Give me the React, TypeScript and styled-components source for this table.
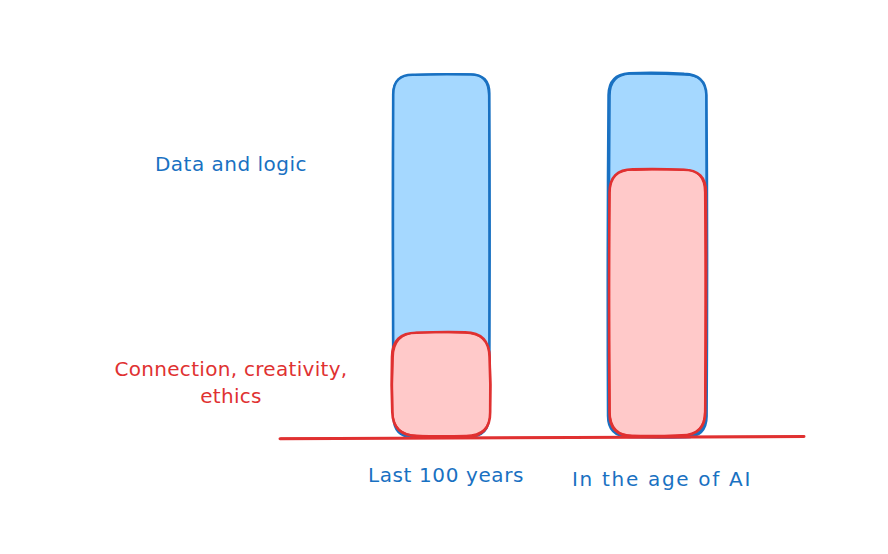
import React from "react";
import styled, { createGlobalStyle } from "styled-components";

const GlobalStyle = createGlobalStyle`
  html, body {
    margin: 0;
    padding: 0;
    background: #ffffff;
  }
  body {
    font-family: "DejaVu Sans", "Liberation Sans", sans-serif;
  }
`;

const BLUE = "#1971c2";
const BLUE_FILL = "#a5d8ff";
const RED = "#e03131";
const RED_FILL = "#ffc9c9";

const BAR_W = 99;
const BAR_H = 364;

// small deterministic wobble so the shapes look hand drawn
const wob = (seed: number) => Math.sin(seed * 12.9898) * 0.8;

const roughRect = (x: number, y: number, w: number, h: number, r: number, seed: number) => {
  const j = (n: number) => wob(seed + n);
  const x2 = x + w;
  const y2 = y + h;
  return [
    `M ${x + r + j(1)} ${y + j(2)}`,
    `Q ${x + w / 2} ${y - 1 + j(3)} ${x2 - r + j(4)} ${y + j(5)}`,
    `Q ${x2 + j(6)} ${y + j(7)} ${x2 + j(8)} ${y + r}`,
    `Q ${x2 + 1 + j(9)} ${y + h / 2} ${x2 + j(10)} ${y2 - r}`,
    `Q ${x2 + j(11)} ${y2 + j(12)} ${x2 - r} ${y2 + j(13)}`,
    `Q ${x + w / 2} ${y2 + 1 + j(14)} ${x + r + j(15)} ${y2}`,
    `Q ${x + j(16)} ${y2 + j(17)} ${x + j(18)} ${y2 - r}`,
    `Q ${x - 1 + j(19)} ${y + h / 2} ${x + j(20)} ${y + r}`,
    `Q ${x + j(21)} ${y + j(22)} ${x + r + j(1)} ${y + j(2)}`,
  ].join(" ");
};

const periods = [
  { label: "Last 100 years", human: 104, seed: 1, drop: 22, track: 0.6 },
  { label: "In the age of AI", human: 268, seed: 9, drop: 26, track: 1.7 },
];

// grid tracks follow the drawing: legend | bar | gap | bar | tail
const Stage = styled.div`
  display: grid;
  width: 888px;
  height: 554px;
  grid-template-columns: 280px 112px ${BAR_W}px 117px ${BAR_W}px 98px 1fr;
  grid-template-rows: 73px ${BAR_H}px 3px 1fr;
  background: #ffffff;
  overflow: hidden;
`;

const Legend = styled.div`
  grid-column: 1 / 3;
  grid-row: 2;
  display: flex;
  flex-direction: column;
  justify-content: space-between;
  align-items: center;
  padding: 78px 0 27px 70px;
`;

const Note = styled.div<{ $color: string; $track: number }>`
  color: ${(p) => p.$color};
  font-size: 20px;
  line-height: 27px;
  letter-spacing: ${(p) => p.$track}px;
  text-align: center;
  white-space: nowrap;
`;

const BarSlot = styled.div<{ $col: number }>`
  grid-column: ${(p) => p.$col};
  grid-row: 2;
  display: flex;
`;

const BarSvg = styled.svg`
  overflow: visible;
  display: block;
`;

const Axis = styled.svg`
  grid-column: 2 / 7;
  grid-row: 3;
  overflow: visible;
  display: block;
`;

const Period = styled.div<{ $col: number; $drop: number; $track: number }>`
  grid-column: ${(p) => p.$col};
  grid-row: 4;
  justify-self: center;
  align-self: start;
  padding: ${(p) => p.$drop}px 0 0 9px;
  color: ${BLUE};
  font-size: 20px;
  line-height: 27px;
  letter-spacing: ${(p) => p.$track}px;
  white-space: nowrap;
`;

const Stroke = ({ d, color }: { d: [string, string]; color: string }) => (
  <>
    <path d={d[0]} fill="none" stroke={color} strokeWidth={2.6} strokeLinejoin="round" />
    <path d={d[1]} fill="none" stroke={color} strokeWidth={1.5} strokeLinejoin="round" />
  </>
);

const StackedBar = ({ human, seed }: { human: number; seed: number }) => {
  const top = BAR_H - human;
  const blue = roughRect(0.8, 1, BAR_W - 2, BAR_H - 1, 21, seed);
  const blue2 = roughRect(1.4, 1.4, BAR_W - 3, BAR_H - 2, 21, seed + 3);
  const red = roughRect(0.8, top, BAR_W - 2, human - 1, 24, seed + 5);
  const red2 = roughRect(1.4, top + 0.4, BAR_W - 3, human - 2, 24, seed + 8);
  return (
    <BarSvg width={BAR_W} height={BAR_H} viewBox={`0 0 ${BAR_W} ${BAR_H}`}>
      <path d={blue} fill={BLUE_FILL} />
      <Stroke d={[blue, blue2]} color={BLUE} />
      <path d={red} fill={RED_FILL} />
      <Stroke d={[red, red2]} color={RED} />
    </BarSvg>
  );
};

export default function App() {
  return (
    <>
      <GlobalStyle />
      <Stage>
        <Legend>
          <Note $color={BLUE} $track={0.5}>
            Data and logic
          </Note>
          <Note $color={RED} $track={0.3}>
            Connection, creativity,
            <br />
            ethics
          </Note>
        </Legend>
        {periods.map((p, i) => (
          <BarSlot key={p.label} $col={3 + i * 2}>
            <StackedBar human={p.human} seed={p.seed} />
          </BarSlot>
        ))}
        <Axis width={525} height={3} viewBox="0 0 525 3">
          <path d="M 0 1.8 Q 260 0.8 524 -0.4" fill="none" stroke={RED} strokeWidth={3} strokeLinecap="round" />
          <path d="M 1 1.4 Q 265 1.1 523 -0.8" fill="none" stroke={RED} strokeWidth={1.6} strokeLinecap="round" />
        </Axis>
        {periods.map((p, i) => (
          <Period key={p.label} $col={3 + i * 2} $drop={p.drop} $track={p.track}>
            {p.label}
          </Period>
        ))}
      </Stage>
    </>
  );
}
